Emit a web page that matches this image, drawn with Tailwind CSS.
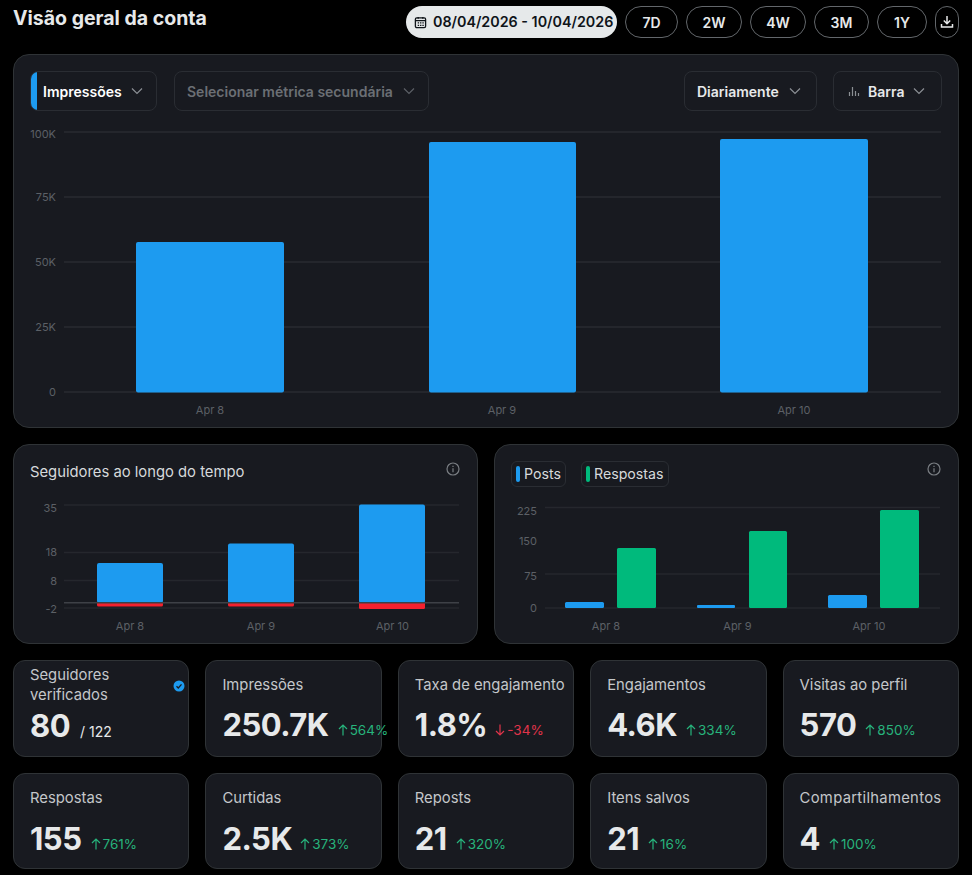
<!DOCTYPE html>
<html lang="pt">
<head>
    <meta charset="UTF-8">
    <meta name="viewport" content="width=device-width, initial-scale=1.0">
    <title>Visão geral da conta</title>
    <script src="https://cdn.jsdelivr.net/npm/@tailwindcss/browser@4"></script>
</head>
<body class="bg-black [font-family:Inter,sans-serif] text-[#e7e9ea] overflow-hidden">
<div class="w-[972px] h-[875px] px-[13px]">

    <!-- topo -->
    <div class="h-[54px] flex justify-between items-start">
        <h1 class="text-[19.5px] leading-[24px] font-bold mt-[6px]">Visão geral da conta</h1>
        <div class="flex gap-[8px] mt-[6px] text-[14px] font-semibold">
            <button class="w-[211px] h-[32px] rounded-full bg-[#e6e9ea] text-[#0f1419] flex items-center pl-[8px] gap-[6px] text-[14.3px]">
                <svg class="w-[13px] h-[13px]" viewBox="0 0 14 14" fill="none" stroke="currentColor" stroke-width="1.4"><rect x="1.5" y="2" width="11" height="10.5" rx="1.5"/><path d="M1.5 5h11M4.5 1v2M9.5 1v2M4 7.5h1.5M6.5 7.5H8M9 7.5h1.5M4 10h1.5M6.5 10H8M9 10h1.5"/></svg>
                <span>08/04/2026 - 10/04/2026</span>
            </button>
            <button class="w-[53px] h-[32px] rounded-full border border-[#63676b]">7D</button>
            <button class="w-[56px] h-[32px] rounded-full border border-[#63676b]">2W</button>
            <button class="w-[56px] h-[32px] rounded-full border border-[#63676b]">4W</button>
            <button class="w-[55px] h-[32px] rounded-full border border-[#63676b]">3M</button>
            <button class="w-[50px] h-[32px] rounded-full border border-[#63676b]">1Y</button>
            <button class="w-[24px] h-[32px] rounded-full border border-[#63676b] flex items-center justify-center">
                <svg class="w-[14px] h-[14px]" viewBox="0 0 14 14" fill="none" stroke="currentColor" stroke-width="1.5"><path d="M7 1v7.5M3.8 5.5 7 8.7l3.2-3.2M1.5 9v3h11V9"/></svg>
            </button>
        </div>
    </div>

    <!-- grafico principal -->
    <div class="h-[374px] rounded-[16px] border border-[#2f3336] bg-[#181a20] pt-[16px] px-[16px]">
        <div class="flex justify-between h-[40px] text-[14px] font-semibold">
            <div class="flex gap-[17px]">
                <div class="w-[127px] rounded-[8px] border border-[#2a2d33] flex items-center overflow-hidden">
                    <span class="w-[6px] h-full bg-[#1d9bf0]"></span>
                    <span class="ml-[6px] text-white">Impressões</span>
                    <svg class="w-[12px] h-[12px] ml-[9px] text-[#8b8f94]" viewBox="0 0 12 12" fill="none" stroke="currentColor" stroke-width="1.2"><path d="M1 3.5 6 8.500l5-5"/></svg>
                </div>
                <div class="w-[255px] rounded-[8px] border border-[#2a2d33] flex items-center pl-[12px] text-[#6b6f74]">
                    <span>Selecionar métrica secundária</span>
                    <svg class="w-[12px] h-[12px] ml-[10px] text-[#5c6066]" viewBox="0 0 12 12" fill="none" stroke="currentColor" stroke-width="1.2"><path d="M1 3.5 6 8.500l5-5"/></svg>
                </div>
            </div>
            <div class="flex gap-[16px]">
                <div class="w-[133px] rounded-[8px] border border-[#2a2d33] flex items-center pl-[12px]">
                    <span>Diariamente</span>
                    <svg class="w-[12px] h-[12px] ml-[10px] text-[#8b8f94]" viewBox="0 0 12 12" fill="none" stroke="currentColor" stroke-width="1.2"><path d="M1 3.5 6 8.500l5-5"/></svg>
                </div>
                <div class="w-[109px] rounded-[8px] border border-[#2a2d33] flex items-center pl-[14px]">
                    <svg class="w-[12px] h-[12px] text-[#8b8f94]" viewBox="0 0 12 12" fill="none" stroke="currentColor" stroke-width="1.2"><path d="M1.500 7v4M4.500 2v9M7.500 6v5M10.500 8v3"/></svg>
                    <span class="ml-[8px]">Barra</span>
                    <svg class="w-[12px] h-[12px] ml-[9px] text-[#8b8f94]" viewBox="0 0 12 12" fill="none" stroke="currentColor" stroke-width="1.2"><path d="M1 3.5 6 8.500l5-5"/></svg>
                </div>
            </div>
        </div>
        <svg class="block -ml-[16px] mt-[9px]" width="944" height="300" viewBox="14 120 944 300">
            <g stroke="#24262c" stroke-width="2">
                <path d="M64 132H941M64 197H941M64 262H941M64 327H941M64 392H941"/>
            </g>
            <rect x="136" y="242" width="148" height="150.500" rx="2" fill="#1d9bf0"/>
            <rect x="429" y="142" width="147" height="250.500" rx="2" fill="#1d9bf0"/>
            <rect x="720" y="139" width="148" height="253.500" rx="2" fill="#1d9bf0"/>
            <g class="text-[11px] fill-[#5c6066]">
                <text x="56" y="138" text-anchor="end">100K</text>
                <text x="56" y="201" text-anchor="end">75K</text>
                <text x="56" y="266" text-anchor="end">50K</text>
                <text x="56" y="331" text-anchor="end">25K</text>
                <text x="56" y="396" text-anchor="end">0</text>
                <text x="210" y="414" text-anchor="middle">Apr 8</text>
                <text x="502" y="414" text-anchor="middle">Apr 9</text>
                <text x="794" y="414" text-anchor="middle">Apr 10</text>
            </g>
        </svg>
    </div>

    <!-- dois graficos menores -->
    <div class="grid grid-cols-2 gap-[16px] mt-[16px]">
        <div class="relative h-[200px] rounded-[16px] border border-[#2f3336] bg-[#181a20]">
            <h2 class="absolute left-[16px] top-[17px] text-[14.8px] leading-[20px] font-normal text-[#d6d9db]">Seguidores ao longo do tempo</h2>
            <svg class="absolute right-[17px] top-[17px] w-[14px] h-[14px] text-[#7a7e83]" viewBox="0 0 14 14" fill="none" stroke="currentColor" stroke-width="1.2"><circle cx="7" cy="7" r="6"/><path d="M7 6.200v4M7 3.800v1.300"/></svg>
            <svg class="block" width="463" height="198" viewBox="14 445 463 198">
                <g stroke="#25272d" stroke-width="1.500">
                    <path d="M64 505H459M64 552.500H459M64 580.500H459M64 608H459"/>
                </g>
                <rect x="97" y="563" width="66" height="40" rx="2" fill="#1d9bf0"/>
                <rect x="228" y="543.500" width="66" height="59.500" rx="2" fill="#1d9bf0"/>
                <rect x="359" y="504.500" width="66" height="98.500" rx="2" fill="#1d9bf0"/>
                <rect x="97" y="602" width="66" height="4.500" rx="1.500" fill="#f4212e"/>
                <rect x="228" y="602" width="66" height="4.500" rx="1.500" fill="#f4212e"/>
                <rect x="359" y="602" width="66" height="7" rx="1.500" fill="#f4212e"/>
                <path d="M64 602.800H459" stroke="#3e4147" stroke-width="1.500"/>
                <g class="text-[11px] fill-[#5c6066]">
                    <text x="57" y="512" text-anchor="end">35</text>
                    <text x="57" y="556" text-anchor="end">18</text>
                    <text x="57" y="585" text-anchor="end">8</text>
                    <text x="57" y="613" text-anchor="end">-2</text>
                    <text x="130" y="630" text-anchor="middle">Apr 8</text>
                    <text x="261" y="630" text-anchor="middle">Apr 9</text>
                    <text x="392.500" y="630" text-anchor="middle">Apr 10</text>
                </g>
            </svg>
        </div>
        <div class="relative h-[200px] rounded-[16px] border border-[#2f3336] bg-[#181a20]">
            <div class="absolute left-[16px] top-[16px] flex gap-[15px] text-[14.2px] text-[#d6d9db]">
                <div class="h-[26px] rounded-[6px] border border-[#2a2d33] flex items-center px-[4px] gap-[4px]">
                    <span class="w-[4px] h-[16px] rounded-[2px] bg-[#1d9bf0]"></span><span>Posts</span>
                </div>
                <div class="h-[26px] rounded-[6px] border border-[#2a2d33] flex items-center px-[4px] gap-[4px]">
                    <span class="w-[4px] h-[16px] rounded-[2px] bg-[#00ba7c]"></span><span>Respostas</span>
                </div>
            </div>
            <svg class="absolute right-[17px] top-[17px] w-[14px] h-[14px] text-[#7a7e83]" viewBox="0 0 14 14" fill="none" stroke="currentColor" stroke-width="1.2"><circle cx="7" cy="7" r="6"/><path d="M7 6.200v4M7 3.800v1.300"/></svg>
            <svg class="block" width="463" height="198" viewBox="495 445 463 198">
                <g stroke="#25272d" stroke-width="1.500">
                    <path d="M545 507.500H940M545 574H940M545 608H940"/>
                </g>
                <rect x="565" y="602" width="39" height="6" rx="1.500" fill="#1d9bf0"/>
                <rect x="617" y="548" width="39" height="60" rx="1.500" fill="#00ba7c"/>
                <rect x="697" y="605" width="38" height="3" rx="1" fill="#1d9bf0"/>
                <rect x="749" y="531" width="38" height="77" rx="1.500" fill="#00ba7c"/>
                <rect x="828" y="595" width="39" height="13" rx="1.500" fill="#1d9bf0"/>
                <rect x="880" y="510" width="39" height="98" rx="1.500" fill="#00ba7c"/>
                <g class="text-[11px] fill-[#5c6066]">
                    <text x="537" y="515" text-anchor="end">225</text>
                    <text x="537" y="545" text-anchor="end">150</text>
                    <text x="537" y="580" text-anchor="end">75</text>
                    <text x="537" y="612" text-anchor="end">0</text>
                    <text x="606" y="630" text-anchor="middle">Apr 8</text>
                    <text x="737.500" y="630" text-anchor="middle">Apr 9</text>
                    <text x="869" y="630" text-anchor="middle">Apr 10</text>
                </g>
            </svg>
        </div>
    </div>

    <!-- cards de metricas -->
    <div class="grid grid-cols-5 gap-x-[16px] gap-y-[16px] mt-[16px]">
        <div class="relative h-[97px] rounded-[12px] border border-[#2f3336] bg-[#181a20] px-[16px]">
            <div class="mt-[4px] w-[110px] text-[14.8px] leading-[20px] text-[#c4c7ca]">Seguidores verificados</div>
            <svg class="absolute right-[3px] top-[19px] w-[12px] h-[12px]" viewBox="0 0 12 12"><circle cx="6" cy="6" r="5.500" fill="#1d9bf0"/><path d="M3.500 6.200 5.300 8l3.200-3.600" fill="none" stroke="#181a20" stroke-width="1.300"/></svg>
            <div class="flex items-baseline mt-[3px]">
                <span class="text-[31px] leading-[36px] tracking-[-0.5px] font-bold">80</span>
                <span class="ml-[10px] text-[14px]">/ 122</span>
            </div>
        </div>
        <div class="h-[97px] rounded-[12px] border border-[#2f3336] bg-[#181a20] px-[16px]">
            <div class="mt-[14px] text-[14.8px] leading-[20px] text-[#c4c7ca] whitespace-nowrap">Impressões</div>
            <div class="flex items-baseline mt-[12px] whitespace-nowrap">
                <span class="text-[31px] leading-[36px] tracking-[-0.5px] font-bold">250.7K</span>
                <span class="ml-[9px] text-[13.5px] text-[#27b47c] flex items-center gap-[2px]">
                    <svg class="w-[10px] h-[12px]" viewBox="0 0 10 12" fill="none" stroke="currentColor" stroke-width="1.200"><path d="M5 11.500V1M1 5l4-4 4 4"/></svg>564%</span>
            </div>
        </div>
        <div class="h-[97px] rounded-[12px] border border-[#2f3336] bg-[#181a20] px-[16px]">
            <div class="mt-[14px] text-[14.8px] leading-[20px] text-[#c4c7ca] whitespace-nowrap">Taxa de engajamento</div>
            <div class="flex items-baseline mt-[12px] whitespace-nowrap">
                <span class="text-[31px] leading-[36px] tracking-[-0.5px] font-bold">1.8%</span>
                <span class="ml-[8px] text-[13.5px] text-[#e0344a] flex items-center gap-[2px]">
                    <svg class="w-[10px] h-[12px]" viewBox="0 0 10 12" fill="none" stroke="currentColor" stroke-width="1.200"><path d="M5 .5V11M1 7l4 4 4-4"/></svg>-34%</span>
            </div>
        </div>
        <div class="h-[97px] rounded-[12px] border border-[#2f3336] bg-[#181a20] px-[16px]">
            <div class="mt-[14px] text-[14.8px] leading-[20px] text-[#c4c7ca] whitespace-nowrap">Engajamentos</div>
            <div class="flex items-baseline mt-[12px] whitespace-nowrap">
                <span class="text-[31px] leading-[36px] tracking-[-0.5px] font-bold">4.6K</span>
                <span class="ml-[9px] text-[13.5px] text-[#27b47c] flex items-center gap-[2px]">
                    <svg class="w-[10px] h-[12px]" viewBox="0 0 10 12" fill="none" stroke="currentColor" stroke-width="1.200"><path d="M5 11.500V1M1 5l4-4 4 4"/></svg>334%</span>
            </div>
        </div>
        <div class="h-[97px] rounded-[12px] border border-[#2f3336] bg-[#181a20] px-[16px]">
            <div class="mt-[14px] text-[14.8px] leading-[20px] text-[#c4c7ca] whitespace-nowrap">Visitas ao perfil</div>
            <div class="flex items-baseline mt-[12px] whitespace-nowrap">
                <span class="text-[31px] leading-[36px] tracking-[-0.5px] font-bold">570</span>
                <span class="ml-[9px] text-[13.5px] text-[#27b47c] flex items-center gap-[2px]">
                    <svg class="w-[10px] h-[12px]" viewBox="0 0 10 12" fill="none" stroke="currentColor" stroke-width="1.200"><path d="M5 11.500V1M1 5l4-4 4 4"/></svg>850%</span>
            </div>
        </div>

        <div class="h-[96px] rounded-[12px] border border-[#2f3336] bg-[#181a20] px-[16px]">
            <div class="mt-[14px] text-[14.8px] leading-[20px] text-[#c4c7ca] whitespace-nowrap">Respostas</div>
            <div class="flex items-baseline mt-[13px] whitespace-nowrap">
                <span class="text-[31px] leading-[36px] tracking-[-0.5px] font-bold">155</span>
                <span class="ml-[9px] text-[13.5px] text-[#27b47c] flex items-center gap-[2px]">
                    <svg class="w-[10px] h-[12px]" viewBox="0 0 10 12" fill="none" stroke="currentColor" stroke-width="1.200"><path d="M5 11.500V1M1 5l4-4 4 4"/></svg>761%</span>
            </div>
        </div>
        <div class="h-[96px] rounded-[12px] border border-[#2f3336] bg-[#181a20] px-[16px]">
            <div class="mt-[14px] text-[14.8px] leading-[20px] text-[#c4c7ca] whitespace-nowrap">Curtidas</div>
            <div class="flex items-baseline mt-[13px] whitespace-nowrap">
                <span class="text-[31px] leading-[36px] tracking-[-0.5px] font-bold">2.5K</span>
                <span class="ml-[8px] text-[13.5px] text-[#27b47c] flex items-center gap-[2px]">
                    <svg class="w-[10px] h-[12px]" viewBox="0 0 10 12" fill="none" stroke="currentColor" stroke-width="1.200"><path d="M5 11.500V1M1 5l4-4 4 4"/></svg>373%</span>
            </div>
        </div>
        <div class="h-[96px] rounded-[12px] border border-[#2f3336] bg-[#181a20] px-[16px]">
            <div class="mt-[14px] text-[14.8px] leading-[20px] text-[#c4c7ca] whitespace-nowrap">Reposts</div>
            <div class="flex items-baseline mt-[13px] whitespace-nowrap">
                <span class="text-[31px] leading-[36px] tracking-[-0.5px] font-bold">21</span>
                <span class="ml-[9px] text-[13.5px] text-[#27b47c] flex items-center gap-[2px]">
                    <svg class="w-[10px] h-[12px]" viewBox="0 0 10 12" fill="none" stroke="currentColor" stroke-width="1.200"><path d="M5 11.500V1M1 5l4-4 4 4"/></svg>320%</span>
            </div>
        </div>
        <div class="h-[96px] rounded-[12px] border border-[#2f3336] bg-[#181a20] px-[16px]">
            <div class="mt-[14px] text-[14.8px] leading-[20px] text-[#c4c7ca] whitespace-nowrap">Itens salvos</div>
            <div class="flex items-baseline mt-[13px] whitespace-nowrap">
                <span class="text-[31px] leading-[36px] tracking-[-0.5px] font-bold">21</span>
                <span class="ml-[9px] text-[13.5px] text-[#27b47c] flex items-center gap-[2px]">
                    <svg class="w-[10px] h-[12px]" viewBox="0 0 10 12" fill="none" stroke="currentColor" stroke-width="1.200"><path d="M5 11.500V1M1 5l4-4 4 4"/></svg>16%</span>
            </div>
        </div>
        <div class="h-[96px] rounded-[12px] border border-[#2f3336] bg-[#181a20] px-[16px]">
            <div class="mt-[14px] text-[14.8px] leading-[20px] tracking-[0.3px] text-[#c4c7ca] whitespace-nowrap">Compartilhamentos</div>
            <div class="flex items-baseline mt-[13px] whitespace-nowrap">
                <span class="text-[31px] leading-[36px] tracking-[-0.5px] font-bold">4</span>
                <span class="ml-[9px] text-[13.5px] text-[#27b47c] flex items-center gap-[2px]">
                    <svg class="w-[10px] h-[12px]" viewBox="0 0 10 12" fill="none" stroke="currentColor" stroke-width="1.200"><path d="M5 11.500V1M1 5l4-4 4 4"/></svg>100%</span>
            </div>
        </div>
    </div>
</div>
</body>
</html>
